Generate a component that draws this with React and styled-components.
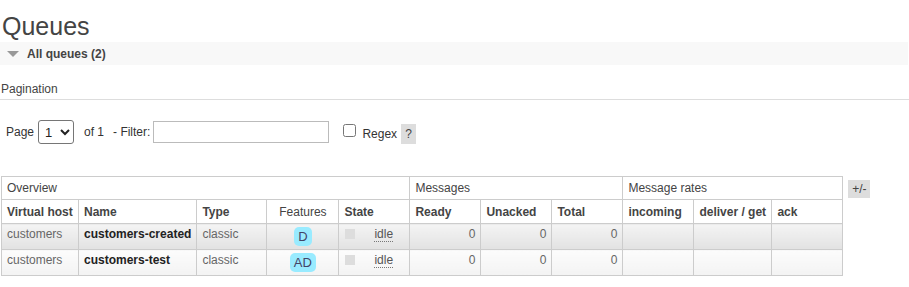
import React from "react";
import styled, { createGlobalStyle } from "styled-components";

const GlobalStyle = createGlobalStyle`
  html, body {
    margin: 0;
    padding: 0;
    background: #fff;
  }
  body {
    font-family: "Liberation Sans", Arial, sans-serif;
    font-size: 12px;
    color: #444;
  }
`;

const queues = [
  { vhost: "customers", name: "customers-created", type: "classic", features: "D", alt: 1 },
  { vhost: "customers", name: "customers-test", type: "classic", features: "AD", alt: 2 },
];

export default function App() {
  return (
    <Page>
      <GlobalStyle />
      <Title>Queues</Title>
      <SectionBar>
        <Arrow />
        <SectionTitle>All queues (2)</SectionTitle>
      </SectionBar>

      <SubHeading>Pagination</SubHeading>
      <FilterRow>
        <span>Page</span>
        <PageSelect defaultValue="1">
          <option value="1">1</option>
        </PageSelect>
        <OfText>of 1</OfText>
        <span>- Filter:</span>
        <FilterInput type="text" />
        <RegexBox type="checkbox" />
        <RegexLabel>Regex</RegexLabel>
        <Help>?</Help>
      </FilterRow>

      <TableWrap>
        <List>
          <thead>
            <tr>
              <GroupTh colSpan={5}>Overview</GroupTh>
              <GroupTh colSpan={3}>Messages</GroupTh>
              <GroupTh colSpan={3}>Message rates</GroupTh>
            </tr>
            <tr>
              <Th $w={66}>Virtual host</Th>
              <Th $w={107}>Name</Th>
              <Th $w={59}>Type</Th>
              <Th $w={61} $plain $center>Features</Th>
              <Th $w={60}>State</Th>
              <Th $w={60}>Ready</Th>
              <Th $w={60}>Unacked</Th>
              <Th $w={60}>Total</Th>
              <Th $w={60}>incoming</Th>
              <Th $w={67}>deliver / get</Th>
              <Th $w={60}>ack</Th>
            </tr>
          </thead>
          <tbody>
            {queues.map((q) => (
              <Row key={q.name} $alt={q.alt}>
                <Td>{q.vhost}</Td>
                <Td $strong>{q.name}</Td>
                <Td>{q.type}</Td>
                <Td $center>
                  <Badge>{q.features}</Badge>
                </Td>
                <Td>
                  <StateCell>
                    <StateDot />
                    <Idle title="idle">idle</Idle>
                  </StateCell>
                </Td>
                <Td $right>0</Td>
                <Td $right>0</Td>
                <Td $right>0</Td>
                <Td />
                <Td />
                <Td />
              </Row>
            ))}
          </tbody>
        </List>
        <Toggle>+/-</Toggle>
      </TableWrap>
    </Page>
  );
}

const Page = styled.div`
  padding: 0 1px;
`;

const Title = styled.h1`
  margin: 0;
  padding: 11px 0 0 1px;
  font-size: 25px;
  font-weight: normal;
  line-height: 31px;
  color: #444;
`;

const SectionBar = styled.div`
  display: flex;
  align-items: center;
  height: 23px;
  background: #f8f8f8;
  margin-left: -1px;
`;

const Arrow = styled.span`
  width: 0;
  height: 0;
  margin: 1px 8px 0 7px;
  border-left: 6px solid transparent;
  border-right: 6px solid transparent;
  border-top: 6px solid #999;
`;

const SectionTitle = styled.span`
  font-weight: bold;
  color: #444;
`;

const SubHeading = styled.div`
  margin-top: 17px;
  padding: 0 0 3px 1px;
  border-bottom: 1px solid #ddd;
  color: #444;
  margin-left: -1px;
  margin-right: -1px;
`;

const FilterRow = styled.div`
  display: flex;
  align-items: center;
  margin-top: 20px;
  padding-left: 5px;
  height: 24px;
  color: #333;
`;

const PageSelect = styled.select`
  margin-left: 4px;
  width: 36px;
  height: 24px;
  font-family: "Liberation Sans", Arial, sans-serif;
  font-size: 13px;
  border: 1px solid #767676;
  border-radius: 3px;
  background: #fff;
  color: #222;
  padding: 0 2px;
`;

const OfText = styled.span`
  margin: 0 9px 0 10px;
`;

const FilterInput = styled.input`
  margin-left: 3px;
  width: 176px;
  height: 22px;
  box-sizing: border-box;
  border: 1px solid #bbb;
  padding: 0 3px;
`;

const RegexBox = styled.input`
  margin: 0 0 4px 14px;
  width: 13px;
  height: 13px;
`;

const RegexLabel = styled.span`
  margin: 3px 0 0 6px;
`;

const Help = styled.span`
  display: inline-flex;
  align-items: center;
  justify-content: center;
  margin: 4px 0 0 4px;
  width: 15px;
  height: 20px;
  background: #ddd;
  color: #444;
`;

const TableWrap = styled.div`
  display: flex;
  align-items: flex-start;
  margin-top: 32px;
`;

const List = styled.table`
  border-collapse: collapse;
  color: #444;
`;

const GroupTh = styled.th`
  text-align: left;
  font-weight: normal;
  border: 1px solid #ccc;
  padding: 0 5px;
  height: 22px;
  line-height: 14px;
`;

const Th = styled.th`
  width: ${(p) => p.$w}px;
  min-width: ${(p) => p.$w}px;
  text-align: ${(p) => (p.$center ? "center" : "left")};
  font-weight: ${(p) => (p.$plain ? "normal" : "bold")};
  border: 1px solid #ccc;
  padding: 0 5px;
  height: 23px;
  line-height: 14px;
  white-space: nowrap;
`;

const Row = styled.tr`
  td {
    background: ${(p) =>
      p.$alt === 1
        ? "linear-gradient(#f4f4f4, #e2e2e2)"
        : "linear-gradient(#fcfcfc, #f3f3f3)"};
  }
`;

const Td = styled.td`
  border: 1px solid #ccc;
  padding: 3px 5px 1px;
  height: 21px;
  vertical-align: top;
  line-height: 14px;
  white-space: nowrap;
  color: ${(p) => (p.$strong ? "#222" : "#666")};
  font-weight: ${(p) => (p.$strong ? "bold" : "normal")};
  text-align: ${(p) => (p.$right ? "right" : p.$center ? "center" : "left")};
`;

const Badge = styled.span`
  display: inline-block;
  margin-top: 0;
  padding: 2px 4px;
  min-width: 7px;
  line-height: 15px;
  border-radius: 5px;
  background: #99ebff;
  color: #446;
  font-size: 13px;
`;

const StateCell = styled.div`
  display: flex;
  align-items: flex-start;
`;

const StateDot = styled.span`
  display: inline-block;
  width: 10px;
  height: 10px;
  margin: 2px 19px 0 1px;
  background: #ddd;
`;

const Idle = styled.abbr`
  text-decoration: none;
  border-bottom: 1px dotted #777;
  color: #555;
`;

const Toggle = styled.span`
  display: inline-flex;
  align-items: center;
  justify-content: center;
  margin: 4px 0 0 5px;
  width: 22px;
  height: 18px;
  background: #ddd;
  color: #444;
`;
